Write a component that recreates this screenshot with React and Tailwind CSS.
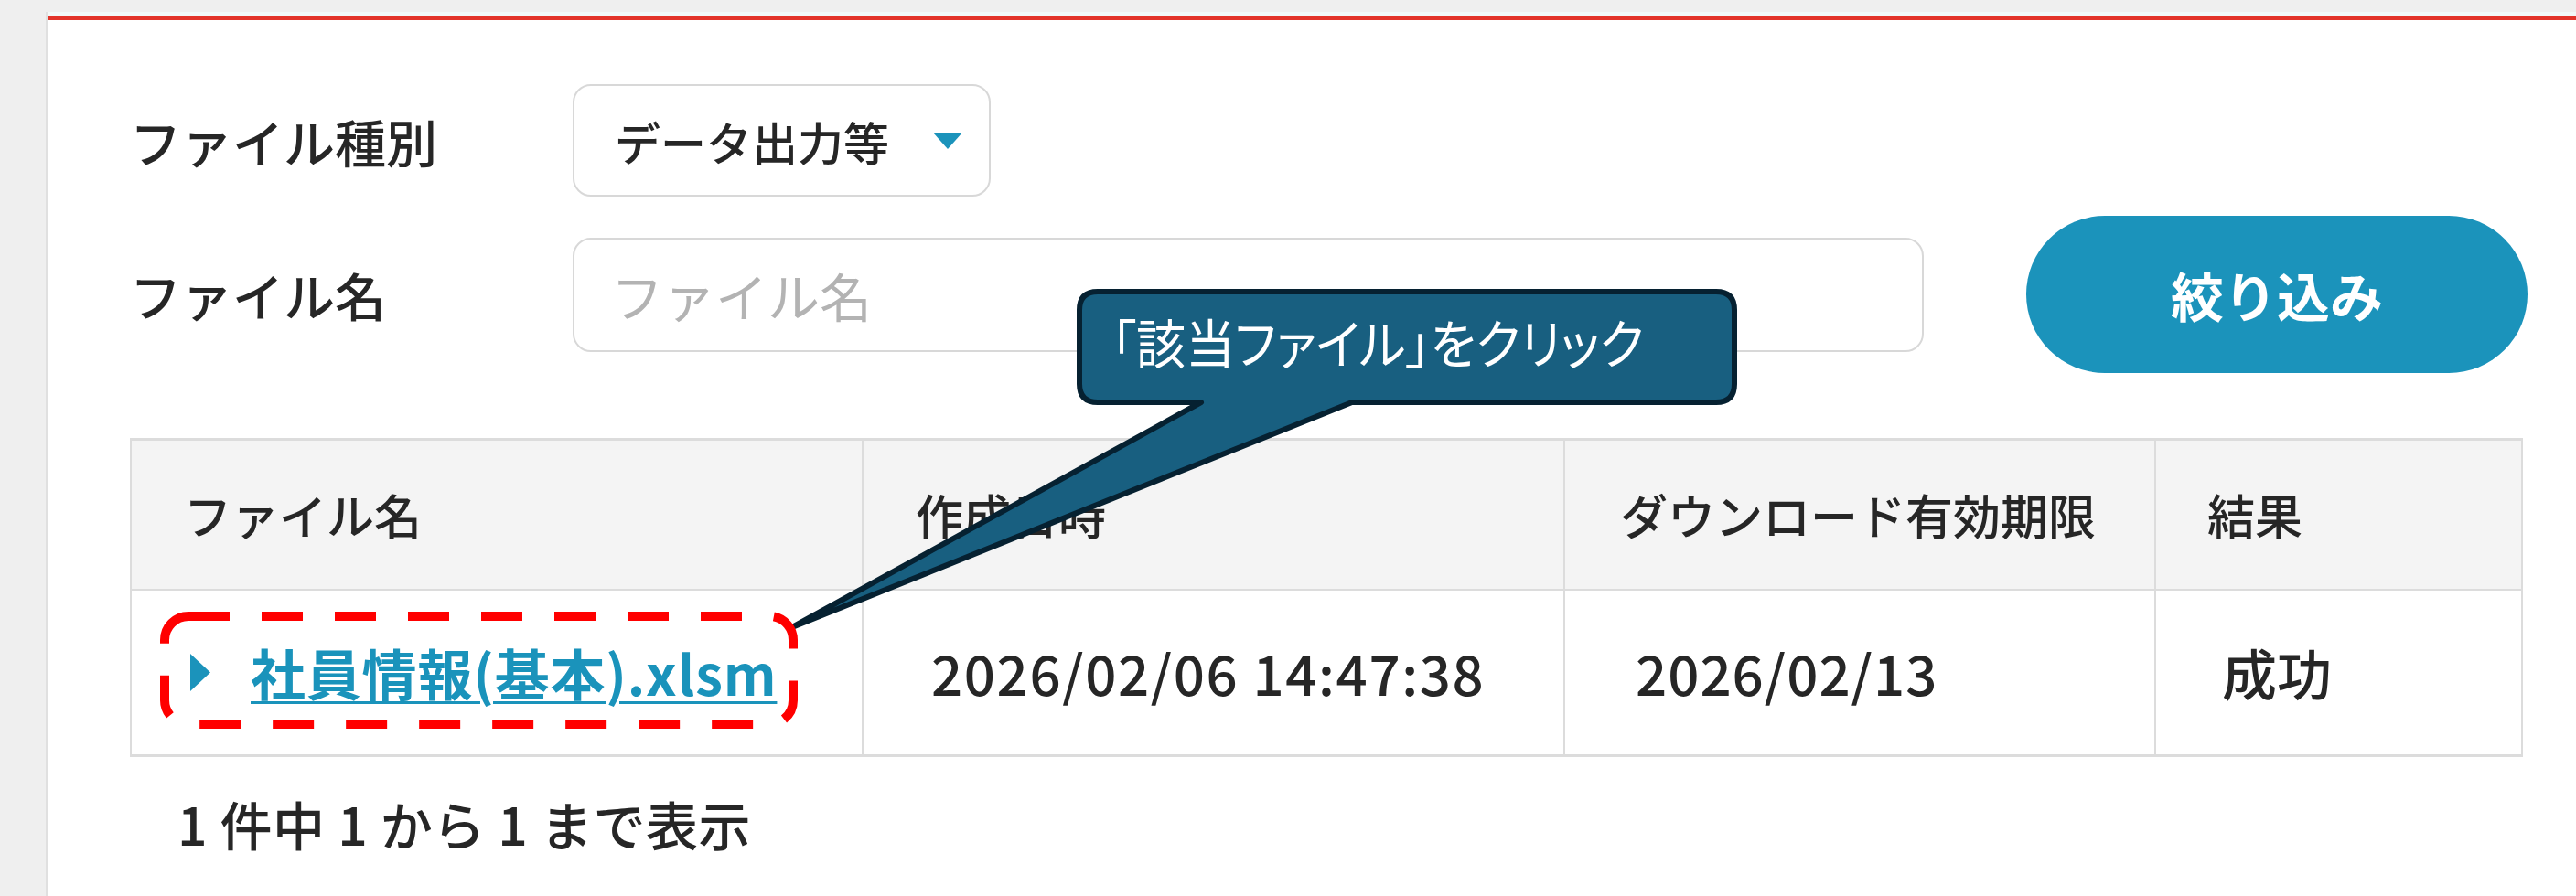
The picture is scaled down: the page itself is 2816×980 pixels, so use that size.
import React from "react";

export default function App() {
  return (
    <div className="relative w-[2816px] h-[980px] overflow-hidden bg-[#efefef] pt-[13px] pl-[50px] [font-family:'Noto_Sans_CJK_JP',sans-serif] text-[#262626]">
      <div className="h-full bg-white border-l-2 border-[#e0e0e0]">
        <div className="h-[4px] bg-[#f2f9f9]" />
        <div className="h-[5px] bg-[#e2342b]" />
        <div className="pl-[90px] pr-[53px] pt-[70px]">
          {/* Row 1 */}
          <div className="flex items-center h-[123px]">
            <div className="w-[484px] text-[56px] leading-none font-medium">ファイル種別</div>
            <div className="w-[457px] h-[123px] border-2 border-[#d8d8d8] rounded-[20px] flex items-center justify-between pl-[44px] pr-[29px]">
              <span className="text-[50px] leading-none font-medium">データ出力等</span>
              <svg width="32" height="18" viewBox="0 0 32 18">
                <polygon points="0,0 32,0 16,18" fill="#1b93bb" />
              </svg>
            </div>
          </div>
          {/* Row 2 */}
          <div className="mt-[21px] flex items-center h-[172px]">
            <div className="w-[484px] text-[56px] leading-none font-medium">ファイル名</div>
            <input
              type="text"
              placeholder="ファイル名"
              className="flex-1 h-[125px] border-2 border-[#d8d8d8] rounded-[20px] pl-[40px] text-[57px] outline-none placeholder:text-[#b3b3b3]"
            />
            <button className="ml-[112px] w-[548px] h-[172px] rounded-full bg-[#1b93bb] text-white font-bold text-[58px] leading-none">
              絞り込み
            </button>
          </div>
          {/* Table */}
          <table className="mt-[71px] table-fixed w-[2614px] border-collapse">
            <colgroup>
              <col className="w-[800px]" />
              <col className="w-[767px]" />
              <col className="w-[646px]" />
              <col className="w-[401px]" />
            </colgroup>
            <thead>
              <tr className="bg-[#f4f4f4] h-[164px]">
                <th className="border-2 border-t-[3px] border-[#dcdcdc] text-left font-medium text-[52px] pl-[57px] align-middle">ファイル名</th>
                <th className="border-2 border-t-[3px] border-[#dcdcdc] text-left font-medium text-[52px] pl-[57px] align-middle">作成日時</th>
                <th className="border-2 border-t-[3px] border-[#dcdcdc] text-left font-medium text-[52px] pl-[60px] align-middle">ダウンロード有効期限</th>
                <th className="border-2 border-t-[3px] border-[#dcdcdc] text-left font-medium text-[52px] pl-[56px] align-middle">結果</th>
              </tr>
            </thead>
            <tbody>
              <tr className="h-[182px]">
                <td className="border-2 border-b-[3px] border-[#dcdcdc] pl-[64px] align-middle">
                  <div className="flex items-center gap-[44px]">
                    <svg width="22" height="41" viewBox="0 0 22 41">
                      <polygon points="0,0 22,20.5 0,41" fill="#1b93bb" />
                    </svg>
                    <a className="font-bold text-[60px] leading-none tracking-[0.8px] text-[#1a93bb] underline decoration-[3px] underline-offset-[6px]">
                      社員情報(基本).xlsm
                    </a>
                  </div>
                </td>
                <td className="border-2 border-b-[3px] border-[#dcdcdc] pl-[74px] text-[60px] font-medium tracking-[1.6px] align-middle">2026/02/06 14:47:38</td>
                <td className="border-2 border-b-[3px] border-[#dcdcdc] pl-[77px] text-[60px] font-medium tracking-[1px] align-middle">2026/02/13</td>
                <td className="border-2 border-b-[3px] border-[#dcdcdc] pl-[72px] text-[60px] font-medium align-middle">成功</td>
              </tr>
            </tbody>
          </table>
          <div className="h-[146px] flex items-center pl-[52px] text-[57px] font-medium tracking-[0.6px]">1 件中 1 から 1 まで表示</div>
        </div>
      </div>

      {/* Callout */}
      <svg
        className="absolute left-[858px] top-[310px] pointer-events-none"
        width="1048"
        height="386"
        viewBox="858 310 1048 386"
      >
        <path
          d="M 1200 319 H 1876 Q 1896 319 1896 339 V 420 Q 1896 440 1876 440 H 1478 L 866 686 L 1313 440 H 1200 Q 1180 440 1180 420 V 339 Q 1180 319 1200 319 Z"
          fill="#185f80"
          stroke="#062131"
          strokeWidth="6"
          strokeLinejoin="round"
        />
      </svg>
      <div className="absolute left-[1177px] top-[316px] w-[722px] h-[127px] flex items-center pl-[38px] pb-[14px] text-white text-[58px] leading-none">
        <span className="inline-block origin-left scale-x-[0.93] whitespace-nowrap [font-feature-settings:'palt']">「該当ファイル」をクリック</span>
      </div>

      {/* Red dashed highlight */}
      <svg className="absolute left-[175px] top-[669px] pointer-events-none" width="697" height="128" viewBox="0 0 697 128">
        <rect x="5" y="5" width="687" height="118" rx="26" fill="none" stroke="#ff0000" strokeWidth="10" strokeDasharray="45 35" />
      </svg>
    </div>
  );
}
